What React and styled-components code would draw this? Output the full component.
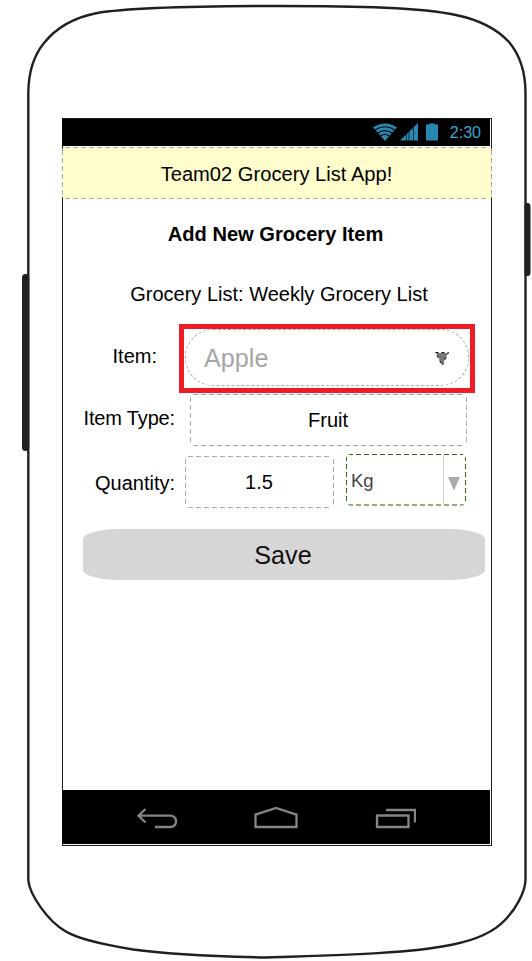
import React from 'react';
import styled, { createGlobalStyle, css } from 'styled-components';

const GlobalStyle = createGlobalStyle`
  *, *::before, *::after { box-sizing: border-box; }
  body { margin: 0; background: #fff; font-family: "Liberation Sans", Arial, sans-serif; color: #000; }
`;

/* Long-dash outline: 5px strokes with 3px gaps along all four sides. */
const dashedOutline = (color, bottom = color, inset = 3) => css`
  background-image:
    repeating-linear-gradient(90deg, ${color} 0 5px, transparent 5px 8px),
    repeating-linear-gradient(90deg, ${bottom} 0 5px, transparent 5px 8px),
    repeating-linear-gradient(180deg, ${color} 0 5px, transparent 5px 8px),
    repeating-linear-gradient(180deg, ${color} 0 5px, transparent 5px 8px);
  background-repeat: no-repeat;
  background-size:
    calc(100% - ${inset * 2}px) 1px,
    calc(100% - ${inset * 2}px) ${bottom === color ? 1 : 2}px,
    1px calc(100% - ${inset * 2}px),
    1px calc(100% - ${inset * 2}px);
  background-position: ${inset}px 0, ${inset}px 100%, 0 ${inset}px, 100% ${inset}px;
`;

const Phone = styled.main`
  position: relative;
  width: 532px;
  height: 961px;
  padding: 118px 0 0 62px;
  overflow: hidden;
`;

const PhoneBody = styled.svg`
  position: absolute;
  inset: 0;
  z-index: -1;
`;

const Screen = styled.div`
  width: 430px;
  height: 728px;
  border: 1px solid #1b1b1b;
  display: flex;
  flex-direction: column;
`;

const StatusBar = styled.div`
  height: 27px;
  margin: 0 1px 0 -1px;
  background: #000;
  display: flex;
  flex-shrink: 0;
  justify-content: flex-end;
  align-items: center;
  padding-right: 9px;
  color: #36a5d3;
`;

const StatusIcons = styled.div`
  display: flex;
  gap: 3px;
  padding-bottom: 2px;
  & > :last-child { margin-left: 5px; }
`;

const Clock = styled.span`
  font-size: 16px;
  line-height: 26px;
  margin-left: 12px;
`;

const Header = styled.header`
  height: 52px;
  flex-shrink: 0;
  margin: 1px -1px 0;
  border-radius: 4px;
  background-color: #fffdcb;
  ${dashedOutline('#aaa')}
  display: flex;
  justify-content: center;
  align-items: center;
  font-size: 20.15px;
  padding: 2px 1px 0 0;
`;

const Title = styled.h1`
  margin: 0;
  height: 70px;
  line-height: 70px;
  font-size: 20.1px;
  font-weight: 700;
  text-align: center;
  padding-right: 3px;
`;

const ListName = styled.p`
  margin: 0;
  height: 55px;
  line-height: 50px;
  font-size: 20px;
  text-align: center;
  padding-left: 4px;
`;

const Row = styled.div`
  display: flex;
  align-items: flex-start;
  height: ${(p) => p.$height}px;
`;

const Label = styled.label`
  width: ${(p) => p.$width}px;
  padding-top: ${(p) => p.$drop}px;
  line-height: 24px;
  font-size: 20px;
  letter-spacing: ${(p) => p.$tracking || 0}px;
  text-align: right;
  white-space: nowrap;
`;

const Highlight = styled.div`
  width: 296px;
  height: 69px;
  margin-left: 22px;
  border: 5px solid #ee1c25;
  padding: 0 1px 2px;
`;

const Combo = styled.div`
  height: 57px;
  border: 1px dashed #aaa;
  border-radius: 28px;
  padding: 2px 19px 0 18px;
  display: flex;
  justify-content: space-between;
  align-items: center;
  color: #a6a6a6;
  font-size: 25.2px;
`;

const Field = styled.div`
  width: ${(p) => p.$width}px;
  height: 52px;
  margin-left: ${(p) => p.$gap}px;
  margin-top: ${(p) => p.$drop}px;
  border-radius: 4px;
  ${dashedOutline('#aaa')}
  display: flex;
  justify-content: center;
  align-items: center;
  font-size: 20px;
  padding: 1px 1px 0 0;
`;

const UnitSelect = styled.div`
  width: 120px;
  height: 52px;
  margin-left: 12px;
  border-radius: 5px;
  ${dashedOutline('#276b00', '#8db37b', 2)}
  display: flex;
  justify-content: space-between;
  font-size: 18.5px;
  line-height: 53px;
  padding-left: 5px;
  color: #444;
`;

const SelectArrow = styled.div`
  width: 23px;
  margin: 1px 0 2px;
  border-left: 1px solid #ccc;
  display: flex;
  justify-content: center;
  align-items: center;
  padding: 8px 2px 0 0;
`;

const SaveButton = styled.button`
  width: 402px;
  height: 51px;
  flex-shrink: 0;
  margin: 0 0 0 20px;
  border: 0;
  padding: 2px 2px 0 0;
  border-radius: 36px / 10px;
  background: #d6d6d6;
  color: #111;
  font: 25.2px "Liberation Sans", Arial, sans-serif;
`;

const NavBar = styled.nav`
  height: 54px;
  flex-shrink: 0;
  margin: auto 1px 1px -1px;
  background: #000;
  display: flex;
  align-items: center;
  padding: 1px 0 0 74px;
  gap: 74px;
`;

const Wifi = () => (
  <svg width="24" height="18" viewBox="0 0 24 18" fill="none">
    <path d="M0 4.3Q12-3.4 24 4.3L12 18Z" fill="#2789b1" />
    <path d="M2.2 7Q12 .5 21.8 7M4.8 10Q12 5.2 19.2 10M7.5 13Q12 9.8 16.5 13" stroke="#000" strokeWidth="1.2" />
  </svg>
);

const Signal = () => (
  <svg width="18" height="18" viewBox="0 0 18 18">
    <path d="M0 17.5L18 0v17.5Z" fill="#2789b1" />
    <path d="M6.5 10v8M9 8v10M13.500 3v15" stroke="#000" strokeOpacity=".65" />
  </svg>
);

const Battery = () => (
  <svg width="12" height="18" viewBox="0 0 12 18">
    <path d="M0 1.500h3V.5h6v1h3v16H0Z" fill="#2789b1" />
  </svg>
);

export default function App() {
  return (
    <Phone>
      <GlobalStyle />
      <PhoneBody width="532" height="961" fill="none" stroke="#231f20" strokeWidth="2.4">
        <path d="M28.3 880V93C28.5 70 35 54 44 43C56 28 72 18 96 13.2C130 7.5 190 6 277 6C360 6 422 7.5 456 15C480 20 496 28 509 42C519 54 525.5 70 525.5 93V880C525 893 515 910 505 920C493 933 475 940 453 944.5C415 953 345 955 266 957.5C200 956 165 954 133 949.5C100 944 78 939 65 931C48 921 29.500 895 28.3 880Z" />
        <rect x="22" y="274" width="7.2" height="177" rx="3.5" fill="#231f20" stroke="none" />
        <rect x="524.5" y="203" width="6" height="73" rx="3.5" fill="#231f20" stroke="none" />
      </PhoneBody>
      <Screen>
        <StatusBar>
          <StatusIcons>
            <Wifi />
            <Signal />
            <Battery />
          </StatusIcons>
          <Clock>2:30</Clock>
        </StatusBar>
        <Header>Team02 Grocery List App!</Header>
        <Title>Add New Grocery Item</Title>
        <ListName>Grocery List: Weekly Grocery List</ListName>
        <Row $height={69}>
          <Label $width={94} $drop={20}>Item:</Label>
          <Highlight>
            <Combo>
              Apple
              <svg width="14" height="14" viewBox="0 0 14 14">
                <path d="M1 1H13L7.2 13Z" fill="#777" />
                <path d="M.5 .5H13.500L7.2 13.500Z" fill="none" stroke="#111" strokeDasharray="3 3" />
              </svg>
            </Combo>
          </Highlight>
        </Row>
        <Row $height={61}>
          <Label $width={112} $drop={13} $tracking={-0.15}>Item Type:</Label>
          <Field $width={277} $gap={15} $drop={1}>Fruit</Field>
        </Row>
        <Row $height={75}>
          <Label $width={112} $drop={17}>Quantity:</Label>
          <Field $width={149} $gap={10} $drop={2}>1.5</Field>
          <UnitSelect>
            Kg
            <SelectArrow>
              <svg width="12" height="14" viewBox="0 0 12 14">
                <path d="M0 0H12L6 13.500Z" fill="#aaa" />
              </svg>
            </SelectArrow>
          </UnitSelect>
        </Row>
        <SaveButton>Save</SaveButton>
        <NavBar>
          <svg width="44" height="24" viewBox="0 0 44 24" fill="none" stroke="#858585" strokeWidth="2.3">
            <path d="M9.500 3L2.500 9.700L9.500 16.500M2.500 9.700H34.500A5.600 5.600 0 0 1 34.500 21H19" />
          </svg>
          <svg width="44" height="24" viewBox="0 0 44 24" fill="none" stroke="#858585" strokeWidth="2.3">
            <path d="M1.500 21V8.700L22 2L42.500 8.700V21Z" />
          </svg>
          <svg width="44" height="24" viewBox="0 0 44 24" fill="none" stroke="#858585" strokeWidth="2.3">
            <path d="M5 9.500H36.500V21H5ZM14 4H43V16.500" />
          </svg>
        </NavBar>
      </Screen>
    </Phone>
  );
}
